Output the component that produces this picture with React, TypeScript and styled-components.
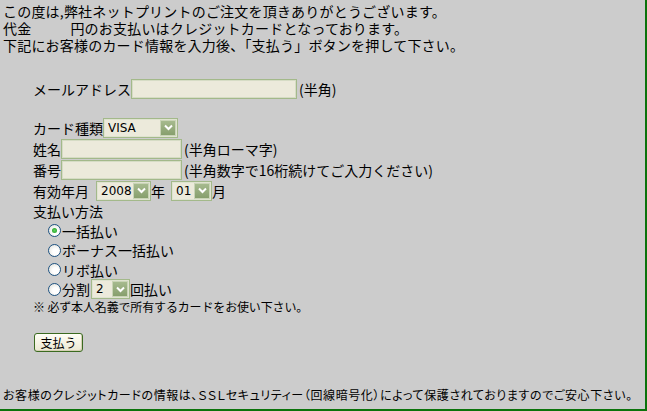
import React, { useState } from 'react';
import styled, { createGlobalStyle } from 'styled-components';

const GlobalStyle = createGlobalStyle`
  html, body {
    margin: 0;
    padding: 0;
    background: #cccccc;
  }
  body {
    font-family: "Noto Sans CJK JP", "Noto Sans", sans-serif;
    color: #000;
  }
`;

const Page = styled.div`
  box-sizing: border-box;
  width: 100vw;
  height: 100vh;
  display: flex;
  flex-direction: column;
  padding: 3px 0 6px 3px;
  border-right: 2px solid #0b730b;
  border-bottom: 2px solid #0b730b;
  font-size: 14px;
`;

const Intro = styled.div`
  display: flex;
  flex-direction: column;
`;

const IntroLine = styled.p`
  margin: 0;
  height: 17px;
  line-height: 17px;
  white-space: nowrap;
  letter-spacing: 0.2px;
`;

const Blank = styled.span`
  display: inline-block;
  width: 39px;
`;

const Form = styled.form`
  margin: 24px 0 0 30px;
  display: flex;
  flex-direction: column;
`;

const Row = styled.div<{ $h?: number; $indent?: number; $gap?: number }>`
  display: flex;
  align-items: center;
  height: ${(p) => p.$h ?? 21}px;
  padding-left: ${(p) => p.$indent ?? 0}px;
  margin-top: ${(p) => p.$gap ?? 0}px;
  white-space: nowrap;
  line-height: 16px;
`;

const Label = styled.span<{ $mr?: number }>`
  margin-right: ${(p) => p.$mr ?? 0}px;
`;

const TextInput = styled.input<{ $w: number }>`
  box-sizing: border-box;
  width: ${(p) => p.$w}px;
  height: 20px;
  margin: 0 2px 0 0;
  padding: 1px 3px;
  border: 1px solid #a3b98a;
  box-shadow: inset 0 0 0 1px #d6dcc5;
  background: #eceadb;
  font: 12px "Noto Sans CJK JP", sans-serif;
  outline: none;
`;

const SelectBox = styled.span<{ $w: number }>`
  box-sizing: border-box;
  display: inline-flex;
  align-items: center;
  width: ${(p) => p.$w}px;
  height: 20px;
  padding: 1px;
  border: 1px solid #a3b98a;
  box-shadow: inset 0 0 0 1px #dfe3d0;
  background: #eceadb;
`;

const NativeSelect = styled.select`
  flex: 1;
  min-width: 0;
  height: 100%;
  appearance: none;
  border: none;
  background: transparent;
  padding: 0 0 0 3px;
  font: 12px "DejaVu Sans", "Noto Sans CJK JP", sans-serif;
  color: #000;
  outline: none;
`;

const Arrow = styled.span`
  box-sizing: border-box;
  flex: none;
  width: 16px;
  height: 16px;
  display: flex;
  align-items: center;
  justify-content: center;
  border: 1px solid #c9d4b6;
  background: linear-gradient(#a6ba8e, #879f6d);
  pointer-events: none;
`;

const Chevron = () => (
  <svg width="9" height="7" viewBox="0 0 9 7">
    <path d="M1 1.5 L4.5 5 L8 1.5" fill="none" stroke="#ffffff" strokeWidth="2" />
  </svg>
);

const Select = ({ w, options }: { w: number; options: string[] }) => (
  <SelectBox $w={w}>
    <NativeSelect defaultValue={options[0]}>
      {options.map((o) => (
        <option key={o}>{o}</option>
      ))}
    </NativeSelect>
    <Arrow>
      <Chevron />
    </Arrow>
  </SelectBox>
);

const Radio = styled.input.attrs({ type: 'radio' })`
  appearance: none;
  box-sizing: border-box;
  width: 13px;
  height: 13px;
  margin: 0 1px 0 0;
  border-radius: 50%;
  border: 1px solid #1d5281;
  background: radial-gradient(circle at 60% 60%, #ffffff 30%, #dcdcd4 100%);
  display: inline-grid;
  place-items: center;
  &:checked::after {
    content: '';
    width: 5px;
    height: 5px;
    border-radius: 50%;
    background: radial-gradient(circle, #5fd35f, #1e9a1e);
  }
`;

const Note = styled.div`
  font-size: 12px;
  height: 14px;
  line-height: 14px;
  margin-top: 1px;
  letter-spacing: -0.15px;
  white-space: nowrap;
`;

const SubmitButton = styled.button`
  box-sizing: border-box;
  align-self: flex-start;
  margin: 19px 0 0 1px;
  width: 49px;
  height: 19px;
  padding: 0;
  border: 1px solid #3b6a20;
  border-radius: 3px;
  background: linear-gradient(#fffef6, #ebe8d2);
  box-shadow: inset -1px -1px 0 #d4d0b4;
  font: 12px "Noto Sans CJK JP", sans-serif;
  line-height: 15px;
  color: #000;
`;

const Footer = styled.p`
  margin: auto 0 0;
  font-size: 12px;
  line-height: 16px;
  white-space: nowrap;
  font-feature-settings: "palt";
  letter-spacing: 0.6px;
`;

const methods = ['一括払い', 'ボーナス一括払い', 'リボ払い'];

export default function App() {
  const [method, setMethod] = useState(0);

  return (
    <>
      <GlobalStyle />
      <Page>
        <Intro>
          <IntroLine>この度は,弊社ネットプリントのご注文を頂きありがとうございます。</IntroLine>
          <IntroLine>
            代金<Blank />円のお支払いはクレジットカードとなっております。
          </IntroLine>
          <IntroLine>下記にお客様のカード情報を入力後、「支払う」ボタンを押して下さい。</IntroLine>
        </Intro>

        <Form onSubmit={(e) => e.preventDefault()}>
          <Row>
            <Label>メールアドレス</Label>
            <TextInput $w={166} />
            (半角)
          </Row>

          <Row $gap={18}>
            <Label>カード種類</Label>
            <Select w={75} options={['VISA', 'MASTER', 'JCB']} />
          </Row>
          <Row>
            <Label>姓名</Label>
            <TextInput $w={121} />
            (半角ローマ字)
          </Row>
          <Row>
            <Label>番号</Label>
            <TextInput $w={121} />
            (半角数字で16桁続けてご入力ください)
          </Row>
          <Row>
            <Label $mr={7}>有効年月</Label>
            <Select w={55} options={['2008', '2009', '2010', '2011', '2012', '2013']} />
            <Label $mr={6}>年</Label>
            <Select w={41} options={['01', '02', '03', '04', '05', '06', '07', '08', '09', '10', '11', '12']} />
            月
          </Row>
          <Row $h={20}>支払い方法</Row>

          {methods.map((m, i) => (
            <Row key={m} $h={19.5} $indent={15}>
              <Radio name="method" checked={method === i} onChange={() => setMethod(i)} />
              {m}
            </Row>
          ))}
          <Row $h={19.5} $indent={15}>
            <Radio name="method" checked={method === 3} onChange={() => setMethod(3)} />
            <Label $mr={1}>分割</Label>
            <Select w={39} options={['2', '3', '6', '10', '12']} />
            回払い
          </Row>

          <Note>※ 必ず本人名義で所有するカードをお使い下さい。</Note>

          <SubmitButton type="submit">支払う</SubmitButton>
        </Form>

        <Footer>
          お客様のクレジットカードの情報は、ＳＳＬセキュリティー（回線暗号化）によって保護されておりますのでご安心下さい。
        </Footer>
      </Page>
    </>
  );
}
